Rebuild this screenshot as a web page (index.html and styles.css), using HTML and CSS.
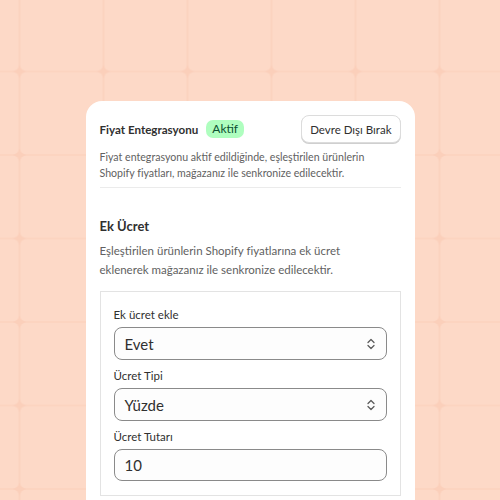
FILE: index.html
```html
<!DOCTYPE html>
<html lang="tr">
<head>
    <meta charset="UTF-8">
    <meta name="viewport" content="width=device-width, initial-scale=1.0">
    <title>Fiyat Entegrasyonu</title>
    <link rel="stylesheet" href="styles.css">
</head>
<body>
    <!-- tiled backdrop -->
    <svg class="backdrop" width="100%" height="100%">
        <defs>
            <pattern id="tiles" width="84" height="83.5" patternUnits="userSpaceOnUse" patternTransform="translate(19.5 71.5)">
                <rect width="84" height="83.5" fill="#fbcfba" />
                <rect x="0.6" y="0.6" width="82.8" height="82.3" rx="6" fill="#fdd9c7" />
            </pattern>
        </defs>
        <rect width="100%" height="100%" fill="url(#tiles)" />
    </svg>

    <main class="card">
        <div class="card-head">
            <div class="title-group">
                <span class="card-title">Fiyat Entegrasyonu</span>
                <span class="badge">Aktif</span>
            </div>
            <button class="btn">Devre Dışı Bırak</button>
        </div>
        <p class="muted head-note">Fiyat entegrasyonu aktif edildiğinde, eşleştirilen ürünlerin Shopify fiyatları, mağazanız ile senkronize edilecektir.</p>

        <section class="section">
            <h2 class="section-title">Ek Ücret</h2>
            <p class="muted section-note">Eşleştirilen ürünlerin Shopify fiyatlarına ek ücret eklenerek mağazanız ile senkronize edilecektir.</p>

            <div class="form-box">
                <div class="field">
                    <label class="field-label">Ek ücret ekle</label>
                    <div class="select">
                        <span>Evet</span>
                        <svg class="chevrons" width="12" height="14" viewBox="0 0 12 14">
                            <path d="M3 5.5 L6 2.5 L9 5.5 M3 8.5 L6 11.5 L9 8.5" />
                        </svg>
                    </div>
                </div>
                <div class="field">
                    <label class="field-label">Ücret Tipi</label>
                    <div class="select">
                        <span>Yüzde</span>
                        <svg class="chevrons" width="12" height="14" viewBox="0 0 12 14">
                            <path d="M3 5.5 L6 2.5 L9 5.5 M3 8.5 L6 11.5 L9 8.5" />
                        </svg>
                    </div>
                </div>
                <div class="field">
                    <label class="field-label">Ücret Tutarı</label>
                    <input class="input" type="text" value="10">
                </div>
            </div>
        </section>
    </main>
</body>
</html>
```

FILE: styles.css
```css
body {
    margin: 0;
    height: 100vh;
    overflow: hidden;
    background: #fdd9c7;
    font-family: Lato, 'Noto Sans', sans-serif;
    color: #303030;
}
.backdrop {
    position: fixed;
    inset: 0;
    z-index: 0;
}
.card {
    position: relative;
    z-index: 1;
    width: 301px;
    height: 400px;
    margin: 101px auto 0;
    padding: 14px 14px 0;
    background: #fff;
    border-radius: 16px;
}
.card-head {
    display: flex;
    justify-content: space-between;
    align-items: center;
}
.title-group {
    display: flex;
    align-items: center;
    gap: 8px;
}
.card-title {
    font-size: 11.6px;
    font-weight: 700;
}
.badge {
    font-size: 12px;
    line-height: 18px;
    padding: 0 6px;
    border-radius: 7px;
    background: #affebf;
    color: #0c5132;
}
.btn {
    height: 28px;
    padding: 0 8px;
    font-family: inherit;
    font-size: 11.5px;
    color: #303030;
    background: #fff;
    border: 1px solid #dcdcdc;
    border-radius: 8px;
    box-shadow: 0 1px 0 #cfcfcf;
}
.muted {
    margin: 0;
    color: #616161;
}
.head-note {
    margin-top: 6px;
    font-size: 10.6px;
    line-height: 16px;
    padding-bottom: 6px;
    border-bottom: 1px solid #ebebeb;
}
.section {
    padding-top: 28px;
}
.section-title {
    margin: 0;
    font-size: 13px;
    line-height: 20px;
    font-weight: 700;
}
.section-note {
    max-width: 270px;
    margin-top: 5px;
    font-size: 11.5px;
    line-height: 19px;
}
.form-box {
    margin-top: 12px;
    padding: 15px 13px 14px;
    border: 1px solid #e3e3e3;
    display: flex;
    flex-direction: column;
    gap: 8px;
}
.field-label {
    display: block;
    font-size: 11.5px;
    line-height: 16px;
    margin-bottom: 4px;
    color: #303030;
}
.select,
.input {
    box-sizing: border-box;
    width: 100%;
    height: 32px;
    border: 1px solid #8a8a8a;
    border-radius: 8px;
    background: #fdfdfd;
    font-family: inherit;
    font-size: 15px;
    color: #303030;
}
.select {
    height: 33px;
    display: flex;
    align-items: center;
    justify-content: space-between;
    padding: 0 9px 0 10px;
}
.input {
    display: block;
    padding: 0 10px;
    outline: none;
}
.chevrons {
    fill: none;
    stroke: #5c5c5c;
    stroke-width: 1.3;
    stroke-linecap: round;
    stroke-linejoin: round;
}
```
